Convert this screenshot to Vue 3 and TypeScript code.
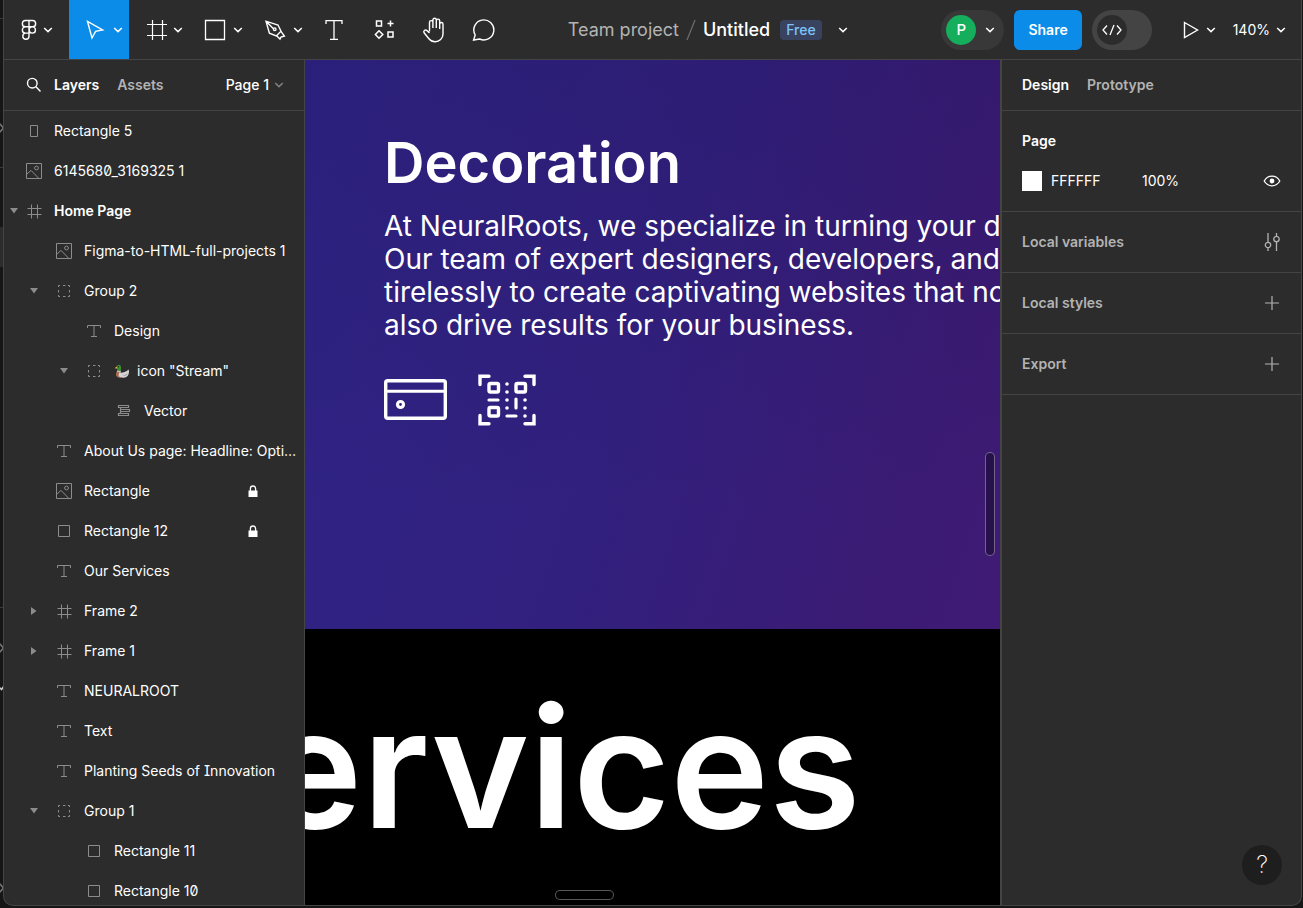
<script setup lang="ts">
import { h, ref } from 'vue'
import type { FunctionalComponent } from 'vue'

interface IconShape {
  w: number
  h: number
  d: string
  stroke?: number
  fill?: string
}

const icons: Record<string, IconShape> = {
  logo: { w: 16, h: 22, stroke: 1.4, d: 'M8 1.5H4.5a3.1 3.1 0 0 0 0 6.3H8zM8 1.5h3.5a3.1 3.1 0 0 1 0 6.3H8zM8 7.8H4.5a3.1 3.1 0 0 0 0 6.3H8zM8 14.1H4.5a3.1 3.1 0 1 0 3.5 3.1zM11.3 7.8a3.1 3.1 0 1 1 0 6.3a3.1 3.1 0 0 1 0-6.3z' },
  move: { w: 20, h: 22, stroke: 1.4, d: 'M2.5 2.5L7 19L10.6 12.4L17.6 11z' },
  frame: { w: 24, h: 22, stroke: 1.2, d: 'M9.5 1v20M19.5 1v20M4 5.5h20M4 16.5h20' },
  rect: { w: 22, h: 22, stroke: 1.3, d: 'M1.5 1.5h19v19h-19z' },
  pen: { w: 22, h: 22, stroke: 1.4, d: 'M2 2.2L5.4 14.2L12.3 17L17 12.2L14 6zM2.3 2.5L9.7 10.1M9.4 10.2a1.3 1.3 0 1 0 2.6 0a1.3 1.3 0 1 0-2.6 0M12.6 16.8L16 20L17 18L20.4 17L17 12.4' },
  type: { w: 20, h: 22, stroke: 1.3, d: 'M2 5V1.7H18V5M10 1.7V20.3M6 20.3h8' },
  resources: { w: 20, h: 22, stroke: 1.5, d: 'M2.5 2h5v5h-5zM14 13h5v5h-5zM16.5 1.5v6M13.5 4.5h6M5 11.8L8.8 15.5L5 19.2L1.4 15.5z' },
  hand: { w: 24, h: 26, stroke: 1.4, d: 'M7.5 14.5V5.3a1.7 1.7 0 0 1 3.4 0V11M10.9 11V3a1.7 1.7 0 0 1 3.4 0v8M14.3 11V3.8a1.7 1.7 0 0 1 3.4 0V12M17.7 12V7.2a1.6 1.6 0 0 1 3.3 0V17a7.8 7.8 0 0 1-8 7.8c-3 0-4.7-1.3-6.3-3.3L2.1 15.8c-1.1-1.8 1-3.5 2.6-2.4L7.5 16' },
  comment: { w: 24, h: 24, stroke: 1.4, d: 'M1.6 22L3.2 17A10 10 0 1 1 7.6 21z' },
  chevron: { w: 10, h: 6, stroke: 1.5, d: 'M1.2 1L5 4.6L8.8 1' },
  play: { w: 16, h: 18, stroke: 1.4, d: 'M1.5 1.5L14.5 9L1.5 16.5z' },
  code: { w: 20, h: 12, stroke: 1.3, d: 'M5 1.5L1 6L5 10.5M15 1.5L19 6L15 10.5M12 1L8 11' },
  search: { w: 16, h: 16, stroke: 1.4, d: 'M1.5 6.2a4.8 4.8 0 1 0 9.6 0a4.8 4.8 0 1 0-9.6 0M9.7 9.6L14.5 14.4' },
  layerPortrait: { w: 16, h: 16, stroke: 1, d: 'M4.5 2.5h7v11h-7z' },
  layerImage: { w: 16, h: 16, stroke: 1, d: 'M.5 .5h15v15h-15zM1 11L5 7.4L12.6 15.2M8.6 5a1.9 1.9 0 1 0 3.8 0a1.9 1.9 0 1 0-3.8 0' },
  layerFrame: { w: 16, h: 16, stroke: 1, d: 'M5.5 1.5v14M11.5 1.5v14M1.5 5.5h14M1.5 11.5h14' },
  layerGroup: { w: 16, h: 16, stroke: 1, d: 'M2.5 4V2.5H4M7 2.5h2.5M12 2.5h1.5V4M13.5 7v2.5M13.5 12v1.5H12M9.5 13.5H7M4 13.5H2.5V12M2.5 9.5V7' },
  layerText: { w: 16, h: 16, stroke: 1, d: 'M1.5 5V2.5H14.5V5M8 2.5V13.5M5 13.5h6' },
  layerRect: { w: 16, h: 16, stroke: 1, d: 'M2.5 2.5h11v11h-11z' },
  layerVector: { w: 16, h: 16, stroke: 1.2, d: 'M2.5 2.5h10v2h-10zM4.5 4.5v2h9v2h-9zM4.5 8.500v2H2.500v2h10v-2H4.500' },
  caretDown: { w: 8, h: 6, fill: 'currentColor', d: 'M0 0H8L4 5.5z' },
  caretRight: { w: 6, h: 8, fill: 'currentColor', d: 'M0 0V8L5.5 4z' },
  lock: { w: 10, h: 12, stroke: 1.3, d: 'M2.4 6V3.6a2.6 2.6 0 0 1 5.2 0V6' },
  eye: { w: 18, h: 12, stroke: 1.3, d: 'M1.2 6C3 2.8 5.8 1.2 9 1.2S15 2.8 16.8 6C15 9.2 12.2 10.8 9 10.8S3 9.2 1.2 6z' },
  variables: { w: 16, h: 18, stroke: 1.3, d: 'M4 0V9M4 15v3M1.3 12a2.7 2.7 0 1 0 5.4 0a2.7 2.7 0 1 0-5.4 0M12.5 0V3M12.5 9v9M9.8 6a2.7 2.7 0 1 0 5.4 0a2.7 2.7 0 1 0-5.4 0' },
  plus: { w: 14, h: 14, stroke: 1.2, d: 'M7 0v14M0 7h14' },
}

const solids: Record<string, string> = {
  lock: 'M.5 5.5h9V12h-9z',
  eye: 'M6.6 6a2.4 2.4 0 1 0 4.8 0a2.4 2.4 0 1 0-4.8 0',
}

const Icon: FunctionalComponent<{ name: string }> = (props) => {
  const icon = icons[props.name]
  const shapes = [
    h('path', {
      d: icon.d,
      fill: icon.fill ?? 'none',
      stroke: icon.stroke ? 'currentColor' : 'none',
      'stroke-width': icon.stroke ?? 0,
    }),
  ]
  if (solids[props.name]) shapes.push(h('path', { d: solids[props.name], fill: 'currentColor' }))
  return h(
    'svg',
    { width: icon.w, height: icon.h, viewBox: `0 0 ${icon.w} ${icon.h}`, 'aria-hidden': 'true' },
    shapes,
  )
}
Icon.props = ['name']

const menuTools = [
  { id: 'move', label: 'Move' },
  { id: 'frame', label: 'Frame' },
  { id: 'rect', label: 'Rectangle' },
  { id: 'pen', label: 'Pen' },
]
const tools = [
  { id: 'type', label: 'Text' },
  { id: 'resources', label: 'Resources' },
  { id: 'hand', label: 'Hand tool' },
  { id: 'comment', label: 'Comment' },
]
const activeTool = ref('move')

interface Layer {
  name: string
  icon: string
  level: number
  open?: boolean
  bold?: boolean
  locked?: boolean
  duck?: boolean
}

const layers: Layer[] = [
  { name: 'Rectangle 5', icon: 'layerPortrait', level: 0 },
  { name: '6145680_3169325 1', icon: 'layerImage', level: 0 },
  { name: 'Home Page', icon: 'layerFrame', level: 0, open: true, bold: true },
  { name: 'Figma-to-HTML-full-projects 1', icon: 'layerImage', level: 1 },
  { name: 'Group 2', icon: 'layerGroup', level: 1, open: true },
  { name: 'Design', icon: 'layerText', level: 2 },
  { name: 'icon "Stream"', icon: 'layerGroup', level: 2, open: true, duck: true },
  { name: 'Vector', icon: 'layerVector', level: 3 },
  { name: 'About Us page: Headline: Optimizing', icon: 'layerText', level: 1 },
  { name: 'Rectangle', icon: 'layerImage', level: 1, locked: true },
  { name: 'Rectangle 12', icon: 'layerRect', level: 1, locked: true },
  { name: 'Our Services', icon: 'layerText', level: 1 },
  { name: 'Frame 2', icon: 'layerFrame', level: 1, open: false },
  { name: 'Frame 1', icon: 'layerFrame', level: 1, open: false },
  { name: 'NEURALROOT', icon: 'layerText', level: 1 },
  { name: 'Text', icon: 'layerText', level: 1 },
  { name: 'Planting Seeds of Innovation', icon: 'layerText', level: 1 },
  { name: 'Group 1', icon: 'layerGroup', level: 1, open: true },
  { name: 'Rectangle 11', icon: 'layerRect', level: 2 },
  { name: 'Rectangle 10', icon: 'layerRect', level: 2 },
]

const collapsedSections = [
  { title: 'Local variables', icon: 'variables', action: 'Open variables' },
  { title: 'Local styles', icon: 'plus', action: 'Create style' },
  { title: 'Export', icon: 'plus', action: 'Add export settings' },
]

const copyLines = [
  'At NeuralRoots, we specialize in turning your digital',
  'Our team of expert designers, developers, and',
  'tirelessly to create captivating websites that not',
  'also drive results for your business.',
]

const pageColor = ref('FFFFFF')
const pageOpacity = ref('100%')
const devMode = ref(false)
</script>

<template>
  <div class="desktop">
    <div class="behind" aria-hidden="true">
      <svg width="3" height="908" viewBox="0 0 3 908" fill="none">
        <path d="M0 18.5h3M0 167.5h3M0 607.5h3" stroke="#3a3a3a" />
        <path d="M0 227h3v40h-3z" fill="#2c2c2c" />
        <path d="M-1 123l4.500 5l-4.500 5M-1 643l4.500 5l-4.500 5M-1 883l4.500 5l-4.500 5" stroke="#777" stroke-width="1.500" />
        <path d="M-1 687l2.500 2.500L4 686" stroke="#ccc" stroke-width="1.500" />
      </svg>
    </div>
    <div class="window">
      <header class="toolbar">
        <button class="menu-btn logo-btn" type="button" aria-label="Main menu">
          <Icon name="logo" />
          <Icon name="chevron" />
        </button>
        <button
          v-for="tool in menuTools"
          :key="tool.id"
          type="button"
          class="menu-btn"
          :class="{ active: activeTool === tool.id }"
          :aria-label="tool.label"
          @click="activeTool = tool.id"
        >
          <span class="tool-icon"><Icon :name="tool.id" /></span>
          <Icon name="chevron" />
        </button>
        <button
          v-for="tool in tools"
          :key="tool.id"
          type="button"
          class="tool-btn"
          :class="{ active: activeTool === tool.id }"
          :aria-label="tool.label"
          @click="activeTool = tool.id"
        >
          <Icon :name="tool.id" />
        </button>

        <div class="file">
          <a class="project" href="#project">Team project</a>
          <svg class="slash" width="10" height="22" viewBox="0 0 10 22" aria-hidden="true">
            <path d="M1 21L9 1" stroke="#6b6b6b" stroke-width="1.300" />
          </svg>
          <h1 class="file-name">Untitled</h1>
          <span class="plan">Free</span>
          <button class="file-menu" type="button" aria-label="File options"><Icon name="chevron" /></button>
        </div>

        <button class="user" type="button" aria-label="Account">
          <span class="avatar">P</span>
          <Icon name="chevron" />
        </button>
        <button class="share" type="button">Share</button>
        <label class="dev-toggle">
          <input v-model="devMode" type="checkbox" aria-label="Dev mode" />
          <span class="knob"><Icon name="code" /></span>
        </label>
        <button class="present" type="button" aria-label="Present">
          <Icon name="play" />
          <Icon name="chevron" />
        </button>
        <button class="zoom" type="button">
          140%
          <Icon name="chevron" />
        </button>
      </header>

      <div class="workspace">
        <aside class="left-panel">
          <nav class="panel-head">
            <button class="search" type="button" aria-label="Search layers"><Icon name="search" /></button>
            <button class="tab selected" type="button">Layers</button>
            <button class="tab" type="button">Assets</button>
            <button class="page-picker" type="button">
              Page 1
              <Icon name="chevron" />
            </button>
          </nav>
          <ul class="layers">
            <li
              v-for="layer in layers"
              :key="layer.name"
              class="layer"
              :class="[`level-${layer.level}`, { bold: layer.bold }]"
            >
              <span class="caret">
                <Icon v-if="layer.open !== undefined" :name="layer.open ? 'caretDown' : 'caretRight'" />
              </span>
              <span class="layer-icon"><Icon :name="layer.icon" /></span>
              <svg v-if="layer.duck" class="duck" width="16" height="16" viewBox="0 0 16 16" aria-hidden="true">
                <path d="M3.500 8.500C2 9 1.500 11 2.200 12.800C3 14.500 5 15 7 14.500L7 9z" fill="#a8694c" />
                <path d="M5 9.500C8 10 11 9.500 14.800 6.500C15.500 10 14.500 13 12 14.300C9 15.300 5 14.500 4.600 12.500z" fill="#d5d5d5" />
                <path d="M7.500 11C9.500 12.500 12 12 13.500 10.500C13 13 10 13.500 7.500 11z" fill="#999" />
                <path d="M3 7.500H6.800V8.800H2.800z" fill="#eee" />
                <path d="M2.600 4.500C2.600 2.500 4 1.600 5.300 1.800C7 2 7.500 4 6.800 7.800H3.200C3.500 6.500 2.600 5.800 2.600 4.500z" fill="#3f8a35" />
                <path d="M2.800 3.500L.6 5.200L3 5.600z" fill="#f0c13a" />
                <path d="M4 3.200h1v1h-1z" fill="#111" />
              </svg>
              <span class="layer-name">{{ layer.name }}</span>
              <span v-if="layer.locked" class="lock"><Icon name="lock" /></span>
            </li>
          </ul>
        </aside>

        <main class="canvas">
          <section class="hero">
            <h2 class="hero-title">Decoration</h2>
            <p class="hero-copy">
              <span v-for="line in copyLines" :key="line">{{ line }}</span>
            </p>
            <div class="hero-icons">
              <svg width="63" height="42" viewBox="0 0 63 42" fill="none" stroke="#fff" aria-hidden="true">
                <rect x="1.700" y="1.700" width="59.600" height="37.600" rx="2" stroke-width="3.400" />
                <path d="M2 12.300H61" stroke-width="3" />
                <circle cx="16.500" cy="25.500" r="3" stroke-width="3.200" />
              </svg>
              <svg width="58" height="52" viewBox="0 0 58 52" fill="none" stroke="#fff" stroke-width="3.400" stroke-linecap="round" aria-hidden="true">
                <path d="M2 10.500V2.200H11M47 2.200H56V10.500M56 41.500V49.800H47M11 49.800H2V41.500" stroke-linejoin="miter" />
                <rect x="11" y="9.500" width="9.500" height="8.500" rx="1.500" />
                <rect x="38" y="9.500" width="9.500" height="8.500" rx="1.500" />
                <rect x="11" y="33.500" width="9.500" height="8.500" rx="1.500" />
                <path d="M11 26H20M38 25V34M29 42H38" stroke-width="3.200" />
                <path d="M29 10h.01M29 18h.01M29 26h.01M29 34h.01M47 26h.01M47 34h.01M47 42h.01" stroke-width="3.600" />
              </svg>
            </div>
          </section>
          <section class="services">
            <h2 class="services-title">Services</h2>
          </section>
          <div class="scroll-y"></div>
          <div class="scroll-x"></div>
        </main>

        <aside class="right-panel">
          <nav class="panel-head">
            <button class="tab selected" type="button">Design</button>
            <button class="tab" type="button">Prototype</button>
          </nav>
          <section class="page-section">
            <h3 class="section-title strong">Page</h3>
            <div class="color-row">
              <button class="swatch" type="button" aria-label="Pick page color"></button>
              <input v-model="pageColor" class="hex" type="text" aria-label="Page color" />
              <input v-model="pageOpacity" class="opacity" type="text" aria-label="Page opacity" />
              <button class="icon-btn bright" type="button" aria-label="Toggle visibility"><Icon name="eye" /></button>
            </div>
          </section>
          <section v-for="section in collapsedSections" :key="section.title" class="section">
            <h3 class="section-title">{{ section.title }}</h3>
            <button class="icon-btn" type="button" :aria-label="section.action"><Icon :name="section.icon" /></button>
          </section>
          <button class="help" type="button" aria-label="Help">?</button>
        </aside>
      </div>
    </div>
  </div>
</template>

<style>
body {
  margin: 0;
  background: #141414;
}
</style>

<style scoped>
* {
  box-sizing: border-box;
}

.desktop {
  display: flex;
  height: 100vh;
  padding: 0 1px 2px 0;
  background: #161616;
  color: #fff;
  font-family: Inter, 'Liberation Sans', sans-serif;
  font-size: 14px;
  line-height: 20px;
  overflow: hidden;
}

button,
input {
  margin: 0;
  padding: 0;
  border: 0;
  background: none;
  color: inherit;
  font: inherit;
}

h1,
h2,
h3,
p,
ul {
  margin: 0;
  padding: 0;
}

svg {
  display: block;
  flex: none;
}

.behind {
  width: 3px;
  flex: none;
  overflow: hidden;
}

.window {
  flex: 1;
  min-width: 0;
  display: flex;
  flex-direction: column;
  border: 1px solid #444;
  border-top: 0;
  border-radius: 0 0 10px 10px;
  background: #2c2c2c;
  overflow: hidden;
}

/* Toolbar */
.toolbar {
  display: flex;
  align-items: center;
  flex: none;
  height: 60px;
  padding-right: 15px;
  border-bottom: 1px solid #444;
}

.menu-btn,
.tool-btn {
  display: flex;
  align-items: center;
  flex: none;
  height: 59px;
}

.menu-btn {
  width: 60px;
  gap: 7px;
  padding-left: 15px;
}

.logo-btn {
  width: 65px;
  gap: 6px;
  padding-left: 17px;
}

.tool-icon {
  display: flex;
  justify-content: center;
  width: 22px;
}

.tool-btn {
  width: 50px;
  justify-content: center;
}

.active {
  background: #0c8ce9;
}

.file {
  flex: 1;
  display: flex;
  align-items: center;
  justify-content: center;
  min-width: 0;
  padding-right: 35px;
  font-size: 18px;
  line-height: 24px;
  white-space: nowrap;
}

.project {
  color: #b3b3b3;
  text-decoration: none;
}

.slash {
  margin: 0 7px;
}

.file-name {
  font-size: 18px;
  font-weight: 500;
}

.plan {
  margin: 0 16px 0 10px;
  padding: 0 6px;
  border-radius: 4px;
  background: #394360;
  color: #7cc4f8;
  font-size: 14px;
  font-weight: 500;
  line-height: 20px;
}

.user {
  display: flex;
  align-items: center;
  gap: 9px;
  flex: none;
  width: 63px;
  height: 40px;
  padding-left: 5px;
  border-radius: 20px;
  background: #383838;
}

.avatar {
  width: 30px;
  border-radius: 50%;
  background: #14ae5c;
  font-size: 15px;
  font-weight: 500;
  line-height: 30px;
  text-align: center;
}

.share {
  flex: none;
  height: 40px;
  margin: 0 10px;
  padding: 0 14px;
  border-radius: 6px;
  background: #0c8ce9;
  font-weight: 600;
}

.dev-toggle {
  display: flex;
  align-items: center;
  flex: none;
  width: 60px;
  height: 40px;
  padding: 5px;
  border-radius: 20px;
  background: #444;
}

.dev-toggle input {
  position: absolute;
  opacity: 0;
}

.dev-toggle input:checked + .knob {
  margin-left: auto;
}

.knob {
  display: flex;
  align-items: center;
  justify-content: center;
  width: 30px;
  height: 30px;
  border-radius: 50%;
  background: #2c2c2c;
}

.present,
.zoom {
  display: flex;
  align-items: center;
  flex: none;
  height: 40px;
}

.present {
  gap: 7px;
  margin: 0 17px 0 31px;
}

.zoom {
  gap: 6px;
}

/* Panels */
.workspace {
  flex: 1;
  display: flex;
  min-height: 0;
}

.left-panel {
  flex: none;
  width: 301px;
  border-right: 1px solid #444;
  overflow: hidden;
}

.panel-head {
  display: flex;
  align-items: center;
  gap: 18px;
  height: 51px;
  border-bottom: 1px solid #444;
}

.left-panel .panel-head {
  padding: 0 20px 0 22px;
}

.search {
  margin-right: -6px;
}

.tab {
  color: #b3b3b3;
  font-weight: 600;
}

.tab.selected {
  color: #fff;
}

.page-picker {
  display: flex;
  align-items: center;
  gap: 5px;
  margin-left: auto;
  font-weight: 500;
}

.page-picker svg {
  color: #808080;
}

.layers {
  list-style: none;
}

.layer {
  display: flex;
  align-items: center;
  height: 40px;
  padding-right: 4px;
}

.level-1 {
  padding-left: 20px;
}

.level-2 {
  padding-left: 50px;
}

.level-3 {
  padding-left: 80px;
}

.caret {
  display: flex;
  justify-content: center;
  flex: none;
  width: 20px;
  margin-right: 10px;
  color: #8c8c8c;
}

.level-0 .caret {
  margin-right: 0;
}

.layer-icon {
  display: flex;
  justify-content: center;
  flex: none;
  width: 20px;
  margin-right: 10px;
  color: #8c8c8c;
}

.duck {
  margin-right: 7px;
}

.layer-name {
  flex: 1;
  min-width: 0;
  overflow: hidden;
  text-overflow: ellipsis;
  white-space: nowrap;
  font-feature-settings: 'zero', 'cv08';
}

.bold .layer-name {
  font-weight: 600;
}

.lock {
  margin-right: 42px;
}

/* Canvas */
.canvas {
  position: relative;
  flex: 1;
  display: flex;
  flex-direction: column;
  min-width: 0;
  background: #000;
  overflow: hidden;
  font-optical-sizing: none;
}

.hero {
  flex: none;
  height: 569px;
  padding: 69px 0 0 79px;
  background:
    linear-gradient(to bottom, rgba(20, 10, 60, 0.15), transparent 80%),
    linear-gradient(108deg, #2e2486 0%, #32207e 50%, #3b1b74 85%, #401b75 100%);
  overflow: hidden;
}

.hero-title {
  font-size: 56px;
  font-weight: 600;
  line-height: 68px;
}

.hero-copy {
  margin-top: 13px;
  font-size: 28px;
  font-weight: 400;
  line-height: 33px;
  white-space: nowrap;
}

.hero-copy span {
  display: block;
}

.hero-icons {
  display: flex;
  align-items: center;
  gap: 31px;
  margin-top: 32px;
}

.services {
  flex: 1;
  padding-top: 54px;
}

.services-title {
  margin-left: -150px;
  font-size: 167px;
  font-weight: 600;
  line-height: 168px;
  white-space: nowrap;
}

.scroll-y,
.scroll-x {
  position: absolute;
  border: 1px solid rgba(255, 255, 255, 0.35);
  border-radius: 5px;
  background: rgba(0, 0, 0, 0.35);
}

.scroll-y {
  top: 392px;
  right: 5px;
  width: 10px;
  height: 104px;
}

.scroll-x {
  bottom: 5px;
  left: 250px;
  width: 59px;
  height: 10px;
}

/* Properties */
.right-panel {
  position: relative;
  flex: none;
  width: 301px;
  border-left: 2px solid #444;
}

.right-panel .panel-head {
  padding-left: 20px;
}

.page-section {
  height: 101px;
  padding: 20px;
  border-bottom: 1px solid #444;
}

.section {
  display: flex;
  align-items: center;
  justify-content: space-between;
  height: 61px;
  padding: 0 20px;
  border-bottom: 1px solid #444;
}

.section-title {
  color: #b3b3b3;
  font-size: 14px;
  font-weight: 600;
}

.section-title.strong {
  color: #fff;
}

.color-row {
  display: flex;
  align-items: center;
  margin-top: 20px;
}

.swatch {
  width: 20px;
  height: 20px;
  margin-right: 9px;
  background: #fff;
}

.hex {
  width: 91px;
}

.opacity {
  width: 60px;
}

.icon-btn {
  display: flex;
  justify-content: center;
  width: 18px;
  margin-left: auto;
  color: #b3b3b3;
}

.section .icon-btn {
  margin-left: 0;
}

.icon-btn.bright {
  color: #fff;
}

.help {
  position: absolute;
  right: 19px;
  bottom: 20px;
  width: 40px;
  height: 40px;
  border-radius: 50%;
  background: #1e1e1e;
  font-size: 24px;
  font-weight: 200;
  line-height: 40px;
}
</style>
